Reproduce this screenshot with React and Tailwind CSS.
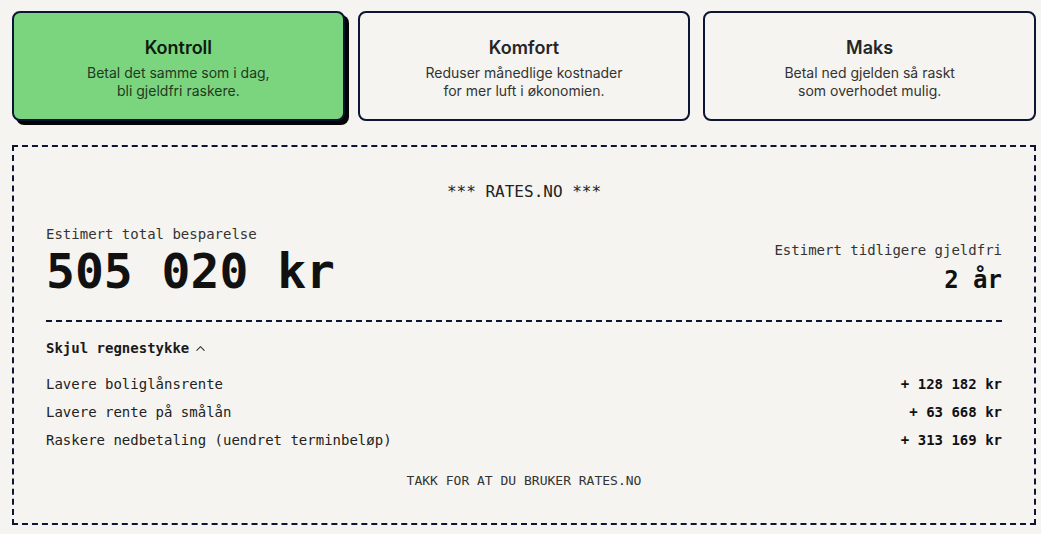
import React from "react";

const cards = [
  { title: "Kontroll", l1: "Betal det samme som i dag,", l2: "bli gjeldfri raskere.", active: true },
  { title: "Komfort", l1: "Reduser månedlige kostnader", l2: "for mer luft i økonomien.", active: false },
  { title: "Maks", l1: "Betal ned gjelden så raskt", l2: "som overhodet mulig.", active: false },
];

const rows = [
  ["Lavere boliglånsrente", "+ 128 182 kr"],
  ["Lavere rente på smålån", "+ 63 668 kr"],
  ["Raskere nedbetaling (uendret terminbeløp)", "+ 313 169 kr"],
];

export default function App() {
  return (
    <div className="min-h-[534px] w-[1041px] bg-[#f5f4f0] pl-3 pr-[5px] pt-[11px] pb-3">
      <div className="grid grid-cols-3 gap-[13px]" style={{ fontFamily: "Inter, 'Noto Sans', sans-serif" }}>
        {cards.map((c) => (
          <div
            key={c.title}
            className={
              "flex h-[110px] flex-col items-center justify-center rounded-lg border-2 border-[#0c1533] pt-[4px] text-center " +
              (c.active ? "bg-[#7bd57f] shadow-[4px_4px_0_#050505]" : "bg-[#f5f4f0]")
            }
          >
            <div className={"text-[18px] font-semibold leading-6 " + (c.active ? "text-[#0d1a0e]" : "text-[#262626]")}>
              {c.title}
            </div>
            <div className={"mt-[4px] text-[14px] leading-[18px] " + (c.active ? "text-[#1e3a22]" : "text-[#333333]")}>
              <div>{c.l1}</div>
              <div>{c.l2}</div>
            </div>
          </div>
        ))}
      </div>

      <div
        className="mt-[24px] border-2 border-dashed border-[#0c1533] px-8 pt-[35px] pb-[34px] text-[#111111]"
        style={{ fontFamily: "'DejaVu Sans Mono', 'Liberation Mono', monospace" }}
      >
        <div className="text-center text-[16px] leading-5 text-[#222222]">*** RATES.NO ***</div>

        <div className="mt-[22px] flex items-end justify-between">
          <div>
            <div className="text-[14px] leading-5 text-[#333333]">Estimert total besparelse</div>
            <div className="mt-[2px] text-[48px] font-bold leading-[50px] text-[#111111]">505 020 kr</div>
          </div>
          <div className="text-right">
            <div className="text-[14px] leading-5 text-[#333333]">Estimert tidligere gjeldfri</div>
            <div className="mt-1 text-[24px] font-bold leading-8 text-[#111111]">2 år</div>
          </div>
        </div>

        <div className="mt-[24px] border-t-2 border-dashed border-[#0c1533]" />

        <div className="mt-4 flex items-center gap-[6px] text-[14px] font-bold leading-5 text-[#1a1a1a]">
          <span>Skjul regnestykke</span>
          <svg width="11" height="11" viewBox="0 0 12 12" fill="none" stroke="#333" strokeWidth="1.2" strokeLinecap="round" strokeLinejoin="round">
            <path d="M2 8 L6 4 L10 8" />
          </svg>
        </div>

        <div className="mt-4 flex flex-col gap-2">
          {rows.map(([l, v]) => (
            <div key={l} className="flex justify-between text-[14px] leading-5">
              <span className="text-[#222222]">{l}</span>
              <span className="font-bold text-[#111111]">{v}</span>
            </div>
          ))}
        </div>

        <div className="mt-[23px] text-center text-[13px] leading-4 text-[#333333]">TAKK FOR AT DU BRUKER RATES.NO</div>
      </div>
    </div>
  );
}
